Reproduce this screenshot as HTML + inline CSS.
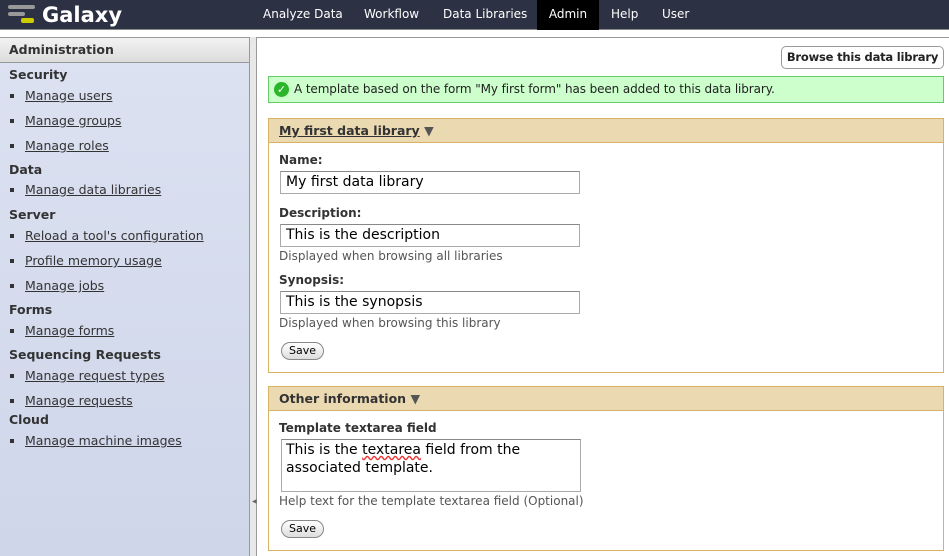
<!DOCTYPE html>
<html><head><meta charset="utf-8"><style>
*{margin:0;padding:0;box-sizing:border-box}
body{width:949px;height:556px;overflow:hidden;font-family:"DejaVu Sans","Liberation Sans",sans-serif;font-size:12px;color:#222;background:#fff;position:relative}
.a{position:absolute;white-space:nowrap}
#top{left:0;top:0;width:949px;height:30px;background:#2c3143;border-bottom:1px solid #888}
.nav{top:0;height:30px;line-height:28px;color:#fff;font-size:12px;padding:0 12px}
#left{left:0;top:37px;width:250px;height:519px;background:linear-gradient(#dce2f1,#cfd6ea);border-right:1px solid #999;border-top:1px solid #999}
#lh{left:0;top:38px;width:249px;height:25px;background:linear-gradient(#f2f2f2,#dcdcdc);border-bottom:1px solid #999;font-weight:bold;font-size:12.5px;line-height:24px;padding-left:9px;color:#333}
.h{left:9px;font-weight:bold;font-size:12.5px;color:#333}
.l{left:25px;text-decoration:underline;font-size:12.5px;color:#333}
.b{left:10px;width:4px;height:4px;background:#333}
#split{left:250px;top:37px;width:7px;height:519px;background:#e8e8e8;border-right:1px solid #999}
#right{left:257px;top:37px;width:692px;height:519px;background:#fff;border-top:1px solid #999}
.box{border:1px solid #d8b365;background:#fff}
.bh{background:#ebd9b2;border-bottom:1px solid #d8b365;height:24px;line-height:24px;padding-left:10px;font-weight:bold;font-size:12.5px;color:#333}
.lab{font-weight:bold;font-size:12px;color:#333}
.inp{border:1px solid #aaa;border-top-color:#888;height:23px;width:300px;font-size:14px;line-height:21px;padding-left:5px;color:#000;background:#fff}
.help{font-size:12px;color:#555}
.btn{border:1px solid #888;border-radius:10px;background:linear-gradient(#fff,#ddd);font-size:11px;height:18px;line-height:16px;padding:0 7px;color:#000}
</style></head><body>
<div id="top" class="a"></div>
<div class="a" style="left:8px;top:5px;width:27px;height:4px;border-radius:2px;background:#999"></div>
<div class="a" style="left:8px;top:12px;width:17px;height:4px;border-radius:2px;background:#999"></div>
<div class="a" style="left:21px;top:18px;width:13px;height:5px;border-radius:2px;background:#cc0"></div>
<div class="a" style="left:42px;top:1px;color:#fff;font-weight:bold;font-size:21px;line-height:28px">Galaxy</div>
<div class="a nav" style="left:251px">Analyze Data</div>
<div class="a nav" style="left:352px">Workflow</div>
<div class="a nav" style="left:431px">Data Libraries</div>
<div class="a nav" style="left:537px;background:#000;width:62px;text-align:center;padding:0">Admin</div>
<div class="a nav" style="left:599px">Help</div>
<div class="a nav" style="left:650px">User</div>

<div id="left" class="a"></div>
<div id="lh" class="a">Administration</div>
<div class="a h" style="top:67px">Security</div>
<div class="a b" style="top:94px"></div><div class="a l" style="top:88px">Manage users</div>
<div class="a b" style="top:119px"></div><div class="a l" style="top:113px">Manage groups</div>
<div class="a b" style="top:144px"></div><div class="a l" style="top:138px">Manage roles</div>
<div class="a h" style="top:162px">Data</div>
<div class="a b" style="top:188px"></div><div class="a l" style="top:182px">Manage data libraries</div>
<div class="a h" style="top:207px">Server</div>
<div class="a b" style="top:234px"></div><div class="a l" style="top:228px">Reload a tool's configuration</div>
<div class="a b" style="top:259px"></div><div class="a l" style="top:253px">Profile memory usage</div>
<div class="a b" style="top:284px"></div><div class="a l" style="top:278px">Manage jobs</div>
<div class="a h" style="top:302px">Forms</div>
<div class="a b" style="top:329px"></div><div class="a l" style="top:323px">Manage forms</div>
<div class="a h" style="top:347px">Sequencing Requests</div>
<div class="a b" style="top:374px"></div><div class="a l" style="top:368px">Manage request types</div>
<div class="a b" style="top:399px"></div><div class="a l" style="top:393px">Manage requests</div>
<div class="a h" style="top:412px">Cloud</div>
<div class="a b" style="top:439px"></div><div class="a l" style="top:433px">Manage machine images</div>

<div id="split" class="a"></div>
<div class="a" style="left:252px;top:498px;font-size:6px;color:#666">◀</div>
<div id="right" class="a"></div>

<div class="a" style="left:781px;top:46px;width:163px;height:23px;border:1px solid #999;border-radius:5px;font-weight:bold;font-size:11.5px;letter-spacing:-0.2px;line-height:21px;text-align:center;color:#222;background:#fff">Browse this data library</div>

<div class="a" style="left:268px;top:76px;width:676px;height:27px;background:#ccffcc;border:1px solid #66cc66"></div>
<div class="a" style="left:274px;top:82px;width:15px;height:15px;border-radius:50%;background:#2bb52b;color:#fff;font-size:11px;line-height:15px;text-align:center;font-weight:bold">✓</div>
<div class="a" style="left:294px;top:82px;font-size:12px;letter-spacing:-0.1px;color:#222">A template based on the form "My first form" has been added to this data library.</div>

<div class="a box" style="left:268px;top:118px;width:676px;height:255px">
<div class="bh"><span style="text-decoration:underline">My first data library</span> <span style="color:#555">▼</span></div>
</div>
<div class="a lab" style="left:279px;top:153px">Name:</div>
<div class="a inp" style="left:280px;top:171px">My first data library</div>
<div class="a lab" style="left:279px;top:206px">Description:</div>
<div class="a inp" style="left:280px;top:224px">This is the description</div>
<div class="a help" style="left:279px;top:249px">Displayed when browsing all libraries</div>
<div class="a lab" style="left:279px;top:273px">Synopsis:</div>
<div class="a inp" style="left:280px;top:291px">This is the synopsis</div>
<div class="a help" style="left:279px;top:316px">Displayed when browsing this library</div>
<div class="a btn" style="left:281px;top:342px">Save</div>

<div class="a box" style="left:268px;top:386px;width:676px;height:165px">
<div class="bh">Other information <span style="color:#555">▼</span></div>
</div>
<div class="a lab" style="left:279px;top:421px">Template textarea field</div>
<div class="a inp" style="left:281px;top:439px;height:53px;line-height:18px;padding-top:1px;padding-left:4px;white-space:normal">This is the <span style="text-decoration:underline wavy #e33">textarea</span> field from the associated template.</div>
<div class="a help" style="left:279px;top:494px">Help text for the template textarea field (Optional)</div>
<div class="a btn" style="left:281px;top:520px">Save</div>
</body></html>
